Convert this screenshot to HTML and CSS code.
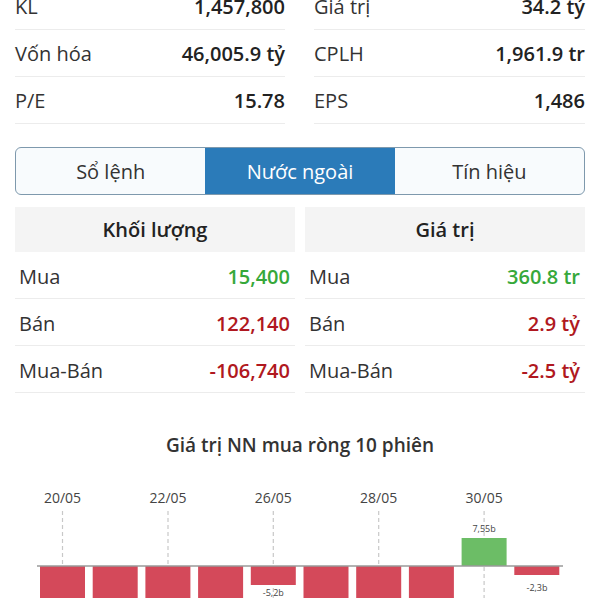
FILE: index.html
```html
<!DOCTYPE html>
<html lang="vi">
  <head>
    <meta charset="UTF-8" />
    <meta name="viewport" content="width=device-width, initial-scale=1.0" />
    <title>Nước ngoài</title>
    <link rel="stylesheet" href="styles.css">
  </head>
  <body>
    <!-- Thong tin co ban -->
    <div class="stats">
      <div class="stat"><span>KL</span><b>1,457,800</b></div>
      <div class="stat"><span>Giá trị</span><b>34.2 tỷ</b></div>
      <div class="stat"><span>Vốn hóa</span><b>46,005.9 tỷ</b></div>
      <div class="stat"><span>CPLH</span><b>1,961.9 tr</b></div>
      <div class="stat"><span>P/E</span><b>15.78</b></div>
      <div class="stat"><span>EPS</span><b>1,486</b></div>
    </div>

    <!-- Tabs -->
    <div class="tabs">
      <div class="tab">Sổ lệnh</div>
      <div class="tab active">Nước ngoài</div>
      <div class="tab">Tín hiệu</div>
    </div>

    <!-- Giao dich nuoc ngoai -->
    <div class="foreign">
      <div class="col">
        <div class="col-head">Khối lượng</div>
        <div class="row"><span>Mua</span><b class="up">15,400</b></div>
        <div class="row"><span>Bán</span><b class="down">122,140</b></div>
        <div class="row"><span>Mua-Bán</span><b class="down">-106,740</b></div>
      </div>
      <div class="col">
        <div class="col-head">Giá trị</div>
        <div class="row"><span>Mua</span><b class="up">360.8 tr</b></div>
        <div class="row"><span>Bán</span><b class="down">2.9 tỷ</b></div>
        <div class="row"><span>Mua-Bán</span><b class="down">-2.5 tỷ</b></div>
      </div>
    </div>

    <!-- Bieu do -->
    <div class="chart">
      <h3>Giá trị NN mua ròng 10 phiên</h3>
      <svg class="chart-svg" width="600" height="130" viewBox="0 0 600 130">
        <g class="grid">
          <line x1="62.5" y1="43" x2="62.5" y2="130" />
          <line x1="168" y1="43" x2="168" y2="130" />
          <line x1="273.3" y1="43" x2="273.3" y2="130" />
          <line x1="378.7" y1="43" x2="378.7" y2="130" />
          <line x1="484.1" y1="43" x2="484.1" y2="130" />
        </g>
        <g class="dates">
          <text x="62.5" y="35">20/05</text>
          <text x="168" y="35">22/05</text>
          <text x="273.3" y="35">26/05</text>
          <text x="378.7" y="35">28/05</text>
          <text x="484.1" y="35">30/05</text>
        </g>
        <g class="neg">
          <rect x="40" y="98" width="45" height="40" />
          <rect x="92.7" y="98" width="45" height="40" />
          <rect x="145.4" y="98" width="45" height="40" />
          <rect x="198.1" y="98" width="45" height="40" />
          <rect x="250.8" y="98" width="45" height="19" />
          <rect x="303.5" y="98" width="45" height="40" />
          <rect x="356.2" y="98" width="45" height="40" />
          <rect x="408.9" y="98" width="45" height="40" />
          <rect x="514.3" y="98" width="45" height="9" />
        </g>
        <rect class="pos" x="461.6" y="70" width="45" height="28" />
        <line class="axis" x1="37" y1="98" x2="563" y2="98" />
        <g class="vals">
          <text x="273.3" y="128">-5,2b</text>
          <text x="484.1" y="64">7,55b</text>
          <text x="537" y="123">-2,3b</text>
        </g>
      </svg>
    </div>
  </body>
</html>
```

FILE: styles.css
```css
body {
  font-family: "Open Sans", "Noto Sans", sans-serif;
  background: white;
  color: #333;
  margin: 0;
  padding: 0;
}

b {
  font-weight: 600;
  color: #222;
}

.stats {
  display: grid;
  grid-template-columns: 270px 271px;
  column-gap: 29px;
  margin: -17px 15px 0;
}

.stat {
  height: 46px;
  border-bottom: 1px solid #ececec;
  display: flex;
  justify-content: space-between;
  align-items: center;
  font-size: 20px;
}

.tabs {
  display: grid;
  grid-template-columns: 1fr 1fr 1fr;
  margin: 23px 15px 0;
  height: 46px;
  border: 1px solid #7e99ad;
  border-radius: 6px;
  overflow: hidden;
  background: #f8fbfd;
}

.tab {
  display: flex;
  justify-content: center;
  align-items: center;
  font-size: 20px;
  color: #333;
}

.tab.active {
  background: #2b7bb9;
  color: white;
}

.foreign {
  display: grid;
  grid-template-columns: 1fr 1fr;
  column-gap: 10px;
  margin: 12px 15px 0;
}

.col-head {
  height: 45px;
  background: #f4f4f4;
  display: flex;
  justify-content: center;
  align-items: center;
  font-size: 20px;
  font-weight: 600;
  color: #222;
}

.row {
  height: 44px;
  border-bottom: 1px solid #ececec;
  display: flex;
  justify-content: space-between;
  align-items: center;
  padding: 2px 5px 0 4px;
  font-size: 20px;
}

.up {
  color: #36a83a;
}

.down {
  color: #b01820;
}

.chart {
  margin-top: 39px;
}

.chart h3 {
  margin: 0;
  text-align: center;
  font-size: 19px;
  font-weight: 600;
  line-height: 26px;
  color: #333;
}

.chart-svg {
  display: block;
  margin-top: 10px;
}

.grid line {
  stroke: #c8c8c8;
  stroke-width: 1.2;
  stroke-dasharray: 4 3;
}

.dates text {
  font-size: 14px;
  fill: #444;
  text-anchor: middle;
}

.neg rect {
  fill: #d4495a;
}

.pos {
  fill: #6cbd66;
}

.axis {
  stroke: #9a9a9a;
  stroke-width: 1.5;
}

.vals text {
  font-size: 9px;
  fill: #444;
  text-anchor: middle;
}
```
